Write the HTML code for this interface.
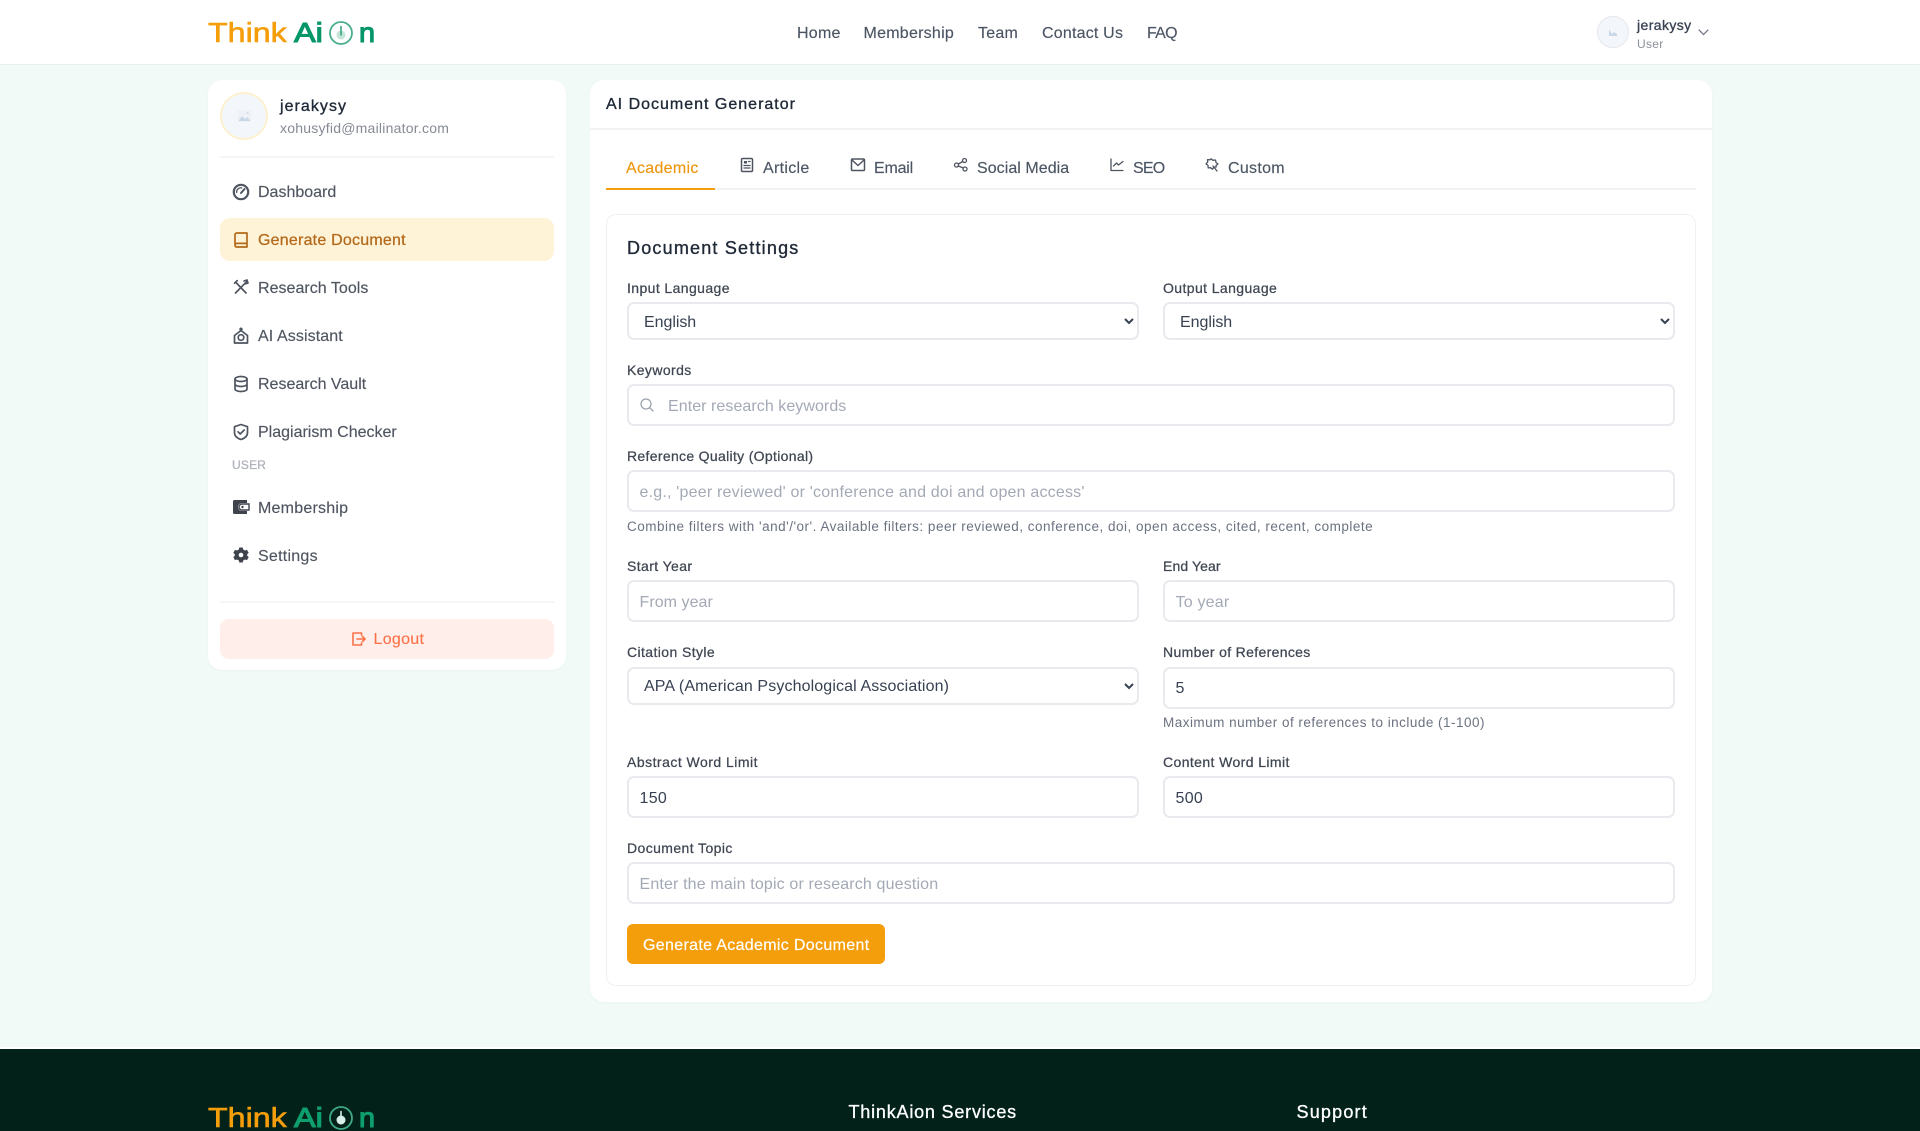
<!DOCTYPE html>
<html lang="en"><head><meta charset="utf-8"><title>AI Document Generator</title>
<style>
*{box-sizing:border-box}
html,body{margin:0;padding:0;width:1920px;height:1131px;overflow:hidden;background:#f1faf7;font-family:"Liberation Sans",sans-serif}
#w{position:relative;width:1920px;height:1131px;overflow:hidden;filter:blur(.3px)}
.b{position:absolute}
.t{position:absolute;line-height:20px;white-space:nowrap}
.nav{font-size:16px;color:#4b5563;top:24px;letter-spacing:.25px;-webkit-text-stroke:.15px #4b5563}
.m{font-size:16px;color:#4f5560;left:258px;letter-spacing:.35px;-webkit-text-stroke:.15px #4f5560}
.tab{font-size:16px;color:#4b5563;top:159px;letter-spacing:.3px;-webkit-text-stroke:.15px #4b5563}
.l{font-size:14px;color:#3f4652;letter-spacing:.4px;font-weight:400;-webkit-text-stroke:.25px #3f4652}
.h{font-size:13.5px;color:#6b7280;letter-spacing:.5px}
input,select{position:absolute;margin:0;background:#fff;border:2px solid #e8eaed;border-radius:7px;font-family:"Liberation Sans",sans-serif;font-size:16px;color:#374151;letter-spacing:.3px;outline:0}
input{height:42px;padding:3.500px 10.500px 0}
select{height:38px;padding:2px 9px 0 11px;letter-spacing:-.05px}
input::placeholder{color:#a3a9b5;opacity:1}
svg{position:absolute;overflow:visible}
.i{width:20px;height:20px;fill:none;stroke:#4f5560;stroke-width:1.7;stroke-linecap:round;stroke-linejoin:round}
.ti{width:16px;height:16px;fill:none;stroke:#4f5560;stroke-width:1.3;stroke-linecap:round;stroke-linejoin:round}
.logo{position:absolute;font-size:28px;line-height:32px;white-space:nowrap;transform-origin:left center}
.o1{color:#f59e0b;-webkit-text-stroke:.6px #f59e0b;transform:scaleX(1.15)}
.g1{color:#059669;-webkit-text-stroke:1.1px #059669;transform:scaleX(1.16)}
.g2{color:#0e9f6e;-webkit-text-stroke:1.1px #0e9f6e;transform:scaleX(1.16)}
</style></head><body><div id="w">

<!-- header -->
<div class="b" style="left:0;top:0;width:1920px;height:65px;background:#fff;border-bottom:1px solid #e8efec"></div>
<span class="logo o1" style="left:208px;top:17px">Think</span>
<span class="logo g1" style="left:294px;top:17px">Ai</span>
<svg style="left:328px;top:20px" width="26" height="26" viewBox="0 0 26 26"><circle cx="13" cy="13" r="11" fill="none" stroke="#48ad8e" stroke-width="1.8"/><circle cx="13" cy="15" r="4.5" fill="#c4e6d9"/><path d="M13 6.500V15" stroke="#3ea484" stroke-width="1.6" stroke-linecap="round"/></svg>
<span class="logo g1" style="left:359px;top:17px;transform:scaleX(1.03)">n</span>

<span class="t nav" style="left:797px">Home</span>
<span class="t nav" style="left:863.500px">Membership</span>
<span class="t nav" style="left:978px">Team</span>
<span class="t nav" style="left:1042px;letter-spacing:.2px">Contact Us</span>
<span class="t nav" style="left:1147px;letter-spacing:-.75px">FAQ</span>

<div class="b" style="left:1597px;top:16px;width:32px;height:32px;border-radius:50%;background:#f3f6fb;border:1.5px solid #e5e7eb"></div>
<svg style="left:1609px;top:28px" width="8" height="8" viewBox="0 0 8 8"><path d="M0 1v7h8V6L5 4 3 6 1 3z" fill="#c9d8e8"/></svg>
<span class="t" style="left:1637px;top:15.300px;font-size:14px;color:#374151;letter-spacing:.4px;-webkit-text-stroke:.3px #374151">jerakysy</span>
<span class="t" style="left:1637px;top:34px;font-size:12px;color:#8b9099;letter-spacing:.3px">User</span>
<svg style="left:1698px;top:29px" width="11" height="7" viewBox="0 0 11 7"><path d="M.7.7 5.500 5.500 10.300.7" fill="none" stroke="#6b7280" stroke-width="1.2"/></svg>

<!-- sidebar -->
<div class="b" style="left:208px;top:80px;width:358px;height:590px;background:#fff;border-radius:14px;box-shadow:0 1px 3px rgba(0,0,0,.03)"></div>
<div class="b" style="left:220px;top:92px;width:48px;height:48px;border-radius:50%;background:#f3f6fb;border:2px solid #fdf0d2"></div>
<svg style="left:238px;top:110px" width="13" height="12" viewBox="0 0 13 12"><path d="M0 0h13v12H0z" fill="#eef2f7"/><path d="M1 10l3-4 3 3 2-2 3 3v1H1z" fill="#c9d8e8"/><circle cx="9.500" cy="3" r="1.200" fill="#d6e0ec"/></svg>
<span class="t" style="left:280px;top:97.200px;font-size:16px;color:#1f2937;letter-spacing:1.05px;-webkit-text-stroke:.35px #1f2937">jerakysy</span>
<span class="t" style="left:280px;top:118px;font-size:14px;color:#858a93;letter-spacing:.23px">xohusyfid@mailinator.com</span>
<div class="b" style="left:220px;top:156px;width:334px;height:1.500px;background:#f5f5f5"></div>

<svg class="i" style="left:231px;top:182px" viewBox="0 0 20 20"><circle cx="10" cy="10" r="7.200" stroke-width="2.200"/><path d="M10 11l3.500-4" stroke-width="2"/><path d="M5.700 10.500a4.300 4.300 0 0 1 5-4.700" stroke-width="1.300"/></svg>
<span class="t m" style="top:183px;letter-spacing:0">Dashboard</span>

<div class="b" style="left:220px;top:218px;width:334px;height:43px;background:#fef3d7;border-radius:10px"></div>
<svg class="i" style="left:231px;top:230px;stroke:#b4691a" viewBox="0 0 20 20"><path d="M4 15.500V4.800A1.800 1.800 0 0 1 5.800 3H16v14H5.800A1.800 1.800 0 0 1 4 15.200a1.800 1.800 0 0 1 1.800-1.800H16"/></svg>
<span class="t m" style="top:231px;color:#b4691a;letter-spacing:.22px;-webkit-text-stroke:.25px #b4691a">Generate Document</span>

<svg class="i" style="left:231px;top:277px" viewBox="0 0 20 20"><path d="M4.500 16 15.500 4.800M15 16 5 5.500M3.600 6.200 6.200 3.600M13 4l3-1 1 3-2.500.8"/></svg>
<span class="t m" style="top:279px;letter-spacing:.03px">Research Tools</span>

<svg class="i" style="left:231px;top:326px" viewBox="0 0 20 20"><path d="M3.500 17V9.500L10 4.500l6.500 5V17z"/><circle cx="10" cy="11.500" r="2.800"/><circle cx="10" cy="3.200" r=".8"/></svg>
<span class="t m" style="top:326.700px;letter-spacing:.1px">AI Assistant</span>

<svg class="i" style="left:231px;top:374px" viewBox="0 0 20 20"><ellipse cx="10" cy="5" rx="6" ry="2.500"/><path d="M4 5v10c0 1.400 2.700 2.500 6 2.500s6-1.100 6-2.500V5M4 10c0 1.400 2.700 2.500 6 2.500s6-1.100 6-2.500"/></svg>
<span class="t m" style="top:375px;letter-spacing:0">Research Vault</span>

<svg class="i" style="left:231px;top:422px" viewBox="0 0 20 20"><path d="M10 2.500l6.500 2.200v6c0 3.300-2.700 5.500-6.500 6.800-3.800-1.300-6.500-3.500-6.500-6.800v-6z"/><path d="M7 9.800l2.200 2.200 4-4"/></svg>
<span class="t m" style="top:423px;letter-spacing:0">Plagiarism Checker</span>

<span class="t" style="left:232px;top:455px;font-size:12px;color:#adb1b8;letter-spacing:.2px;-webkit-text-stroke:.25px #adb1b8">USER</span>

<svg style="left:233px;top:500px" width="16" height="14" viewBox="0 0 16 14"><path d="M0 1.500A1.500 1.500 0 0 1 1.500 0H14v3H9a4 4 0 0 0 0 8h5v3H1.500A1.500 1.500 0 0 1 0 12.500z" fill="#3f444c"/><path d="M9 4h7v6H9a3 3 0 0 1 0-6z" fill="none" stroke="#3f444c" stroke-width="1.400"/><circle cx="9.500" cy="7" r="1.200" fill="#3f444c"/></svg>
<span class="t m" style="top:498.500px;letter-spacing:.22px">Membership</span>

<svg style="left:233px;top:547px" width="16" height="16" viewBox="0 0 16 16"><path d="M6.300.5h3.400l.5 2 1.800 1 2-.6 1.700 3-1.500 1.400v1.400l1.500 1.400-1.700 3-2-.6-1.800 1-.5 2H6.300l-.5-2-1.800-1-2 .6-1.700-3 1.500-1.400V7.300L.3 5.900l1.700-3 2 .6 1.800-1z" fill="#3f444c"/><circle cx="8" cy="8" r="2.300" fill="#fff"/></svg>
<span class="t m" style="top:546.700px;letter-spacing:.25px">Settings</span>

<div class="b" style="left:220px;top:601px;width:334px;height:1.500px;background:#f5f5f5"></div>
<div class="b" style="left:220px;top:619px;width:334px;height:40px;background:#ffeeea;border-radius:9px"></div>
<svg style="left:351px;top:631px" width="15" height="16" viewBox="0 0 15 16"><path d="M10.500 4V2H2v12h8.500v-2M6 8h8M11.500 5.500 14 8l-2.500 2.500" fill="none" stroke="#fb7148" stroke-width="1.600" stroke-linecap="round" stroke-linejoin="round"/></svg>
<span class="t" style="left:373.500px;top:630px;font-size:16px;color:#fb7148;letter-spacing:.3px;-webkit-text-stroke:.12px #fb7148">Logout</span>

<!-- main -->
<div class="b" style="left:590px;top:80px;width:1122px;height:922px;background:#fff;border-radius:14px;box-shadow:0 1px 3px rgba(0,0,0,.03)"></div>
<div class="b" style="left:590px;top:128px;width:1122px;height:2px;background:#f1f2f3"></div>
<span class="t" style="left:606px;top:95px;font-size:16px;color:#1f2937;letter-spacing:1px;-webkit-text-stroke:.35px #1f2937">AI Document Generator</span>

<div class="b" style="left:606px;top:188px;width:1090px;height:1.500px;background:#f0f1f2"></div>
<div class="b" style="left:606px;top:187.500px;width:109px;height:2px;background:#f59e0b"></div>
<span class="t tab" style="left:626px;color:#ed960f;-webkit-text-stroke-color:#ed960f">Academic</span>

<svg class="ti" style="left:739px;top:157px" viewBox="0 0 16 16"><rect x="2.500" y="1.500" width="11" height="13" rx="1.200" stroke-width="1.500"/><rect x="5" y="4" width="3" height="2.500" fill="#4f5560" stroke="none"/><path d="M9.500 4.500H11M5 8.500h6M5 11h6"/></svg>
<span class="t tab" style="left:763px">Article</span>
<svg class="ti" style="left:850px;top:157px" viewBox="0 0 16 16"><rect x="1.500" y="2" width="13" height="11.500" rx="1"  stroke-width="1.500"/><path d="M2 3l6 5.500L14 3" stroke-width="1.500"/></svg>
<span class="t tab" style="left:874px;letter-spacing:-.2px">Email</span>
<svg class="ti" style="left:953px;top:157px" viewBox="0 0 16 16"><circle cx="3.500" cy="8" r="2"/><circle cx="11.500" cy="3.500" r="2"/><circle cx="12" cy="12" r="2"/><path d="M5.300 7l4.400-2.500M5.300 9l5 2"/></svg>
<span class="t tab" style="left:977px;letter-spacing:.05px">Social Media</span>
<svg class="ti" style="left:1109px;top:157px" viewBox="0 0 16 16"><path d="M2 2v11.500h12M4.500 9l3-3 2 2L14 4.500"/></svg>
<span class="t tab" style="left:1133px;letter-spacing:-.8px">SEO</span>
<svg class="ti" style="left:1204px;top:157px" viewBox="0 0 16 16"><path d="M7 1.800l2 1.500 2.500-.3.500 2.500 2 1.500-2 1.500.2 1.500-2.400.2-1.300 2-1.800-1.500-2.500.2-.2-2.500-2-1.500 1.700-1.800-.2-2.500 2.500.2z"/><path d="M9 9l4 5"/></svg>
<span class="t tab" style="left:1228px">Custom</span>

<div class="b" style="left:606px;top:213.500px;width:1090px;height:772px;border:1.500px solid #eff0f1;border-radius:10px"></div>
<span class="t" style="left:627px;top:238px;font-size:18px;color:#1f2937;letter-spacing:1.2px;-webkit-text-stroke:.35px #1f2937">Document Settings</span>

<span class="t l" style="left:627px;top:278px">Input Language</span>
<span class="t l" style="left:1163px;top:278px">Output Language</span>
<select style="left:627px;top:302px;width:512px"><option>English</option></select>
<select style="left:1163px;top:302px;width:512px"><option>English</option></select>

<span class="t l" style="left:627px;top:360px">Keywords</span>
<input style="left:627px;top:384px;width:1048px;padding-left:39px;letter-spacing:.06px" placeholder="Enter research keywords">
<svg style="left:640px;top:398px" width="14" height="14" viewBox="0 0 14 14"><circle cx="6" cy="6" r="5" fill="none" stroke="#9ca3af" stroke-width="1.300"/><path d="M9.800 9.800 13 13" stroke="#9ca3af" stroke-width="1.300" stroke-linecap="round"/></svg>

<span class="t l" style="left:627px;top:446px;letter-spacing:.32px">Reference Quality (Optional)</span>
<input style="left:627px;top:470px;width:1048px;letter-spacing:.2px" placeholder="e.g., 'peer reviewed' or 'conference and doi and open access'">
<span class="t h" style="left:627px;top:517px">Combine filters with 'and'/'or'. Available filters: peer reviewed, conference, doi, open access, cited, recent, complete</span>

<span class="t l" style="left:627px;top:556px">Start Year</span>
<span class="t l" style="left:1163px;top:556px;letter-spacing:.1px">End Year</span>
<input style="left:627px;top:580px;width:512px;letter-spacing:.05px" placeholder="From year">
<input style="left:1163px;top:580px;width:512px;letter-spacing:.2px" placeholder="To year">

<span class="t l" style="left:627px;top:642px">Citation Style</span>
<span class="t l" style="left:1163px;top:642px;letter-spacing:.34px">Number of References</span>
<select style="left:627px;top:666.500px;width:512px;letter-spacing:.12px"><option>APA (American Psychological Association)</option></select>
<input style="left:1163px;top:666.500px;width:512px" value="5">
<span class="t h" style="left:1163px;top:712.500px;letter-spacing:.48px">Maximum number of references to include (1-100)</span>

<span class="t l" style="left:627px;top:752px;letter-spacing:.48px">Abstract Word Limit</span>
<span class="t l" style="left:1163px;top:752px">Content Word Limit</span>
<input style="left:627px;top:776px;width:512px" value="150">
<input style="left:1163px;top:776px;width:512px" value="500">

<span class="t l" style="left:627px;top:838px">Document Topic</span>
<input style="left:627px;top:862px;width:1048px;letter-spacing:.15px" placeholder="Enter the main topic or research question">

<div class="b" style="left:627px;top:924px;width:258px;height:40px;background:#f59e0b;border-radius:6px"></div>
<span class="t" style="left:643px;top:935.500px;font-size:16px;color:#fff;letter-spacing:.33px;-webkit-text-stroke:.2px #fff">Generate Academic Document</span>

<!-- footer -->
<div class="b" style="left:0;top:1046.500px;width:1920px;height:3px;background:#fff"></div>
<div class="b" style="left:0;top:1049px;width:1920px;height:82px;background:#022219"></div>
<span class="logo o1" style="left:208px;top:1102px">Think</span>
<span class="logo g2" style="left:294px;top:1102px">Ai</span>
<svg style="left:328px;top:1105px" width="26" height="26" viewBox="0 0 26 26"><circle cx="13" cy="13" r="11" fill="none" stroke="#3fa98a" stroke-width="1.800"/><circle cx="13" cy="15" r="4.500" fill="#d8efe7"/><path d="M13 6.500V13" stroke="#d8efe7" stroke-width="1.600" stroke-linecap="round"/></svg>
<span class="logo g2" style="left:359px;top:1102px;transform:scaleX(1.03)">n</span>
<span class="t" style="left:848.500px;top:1102px;font-size:18px;color:#fff;letter-spacing:.8px;-webkit-text-stroke:.3px #fff">ThinkAion Services</span>
<span class="t" style="left:1296.500px;top:1102px;font-size:18px;color:#fff;letter-spacing:1.2px;-webkit-text-stroke:.3px #fff">Support</span>

</div></body></html>
